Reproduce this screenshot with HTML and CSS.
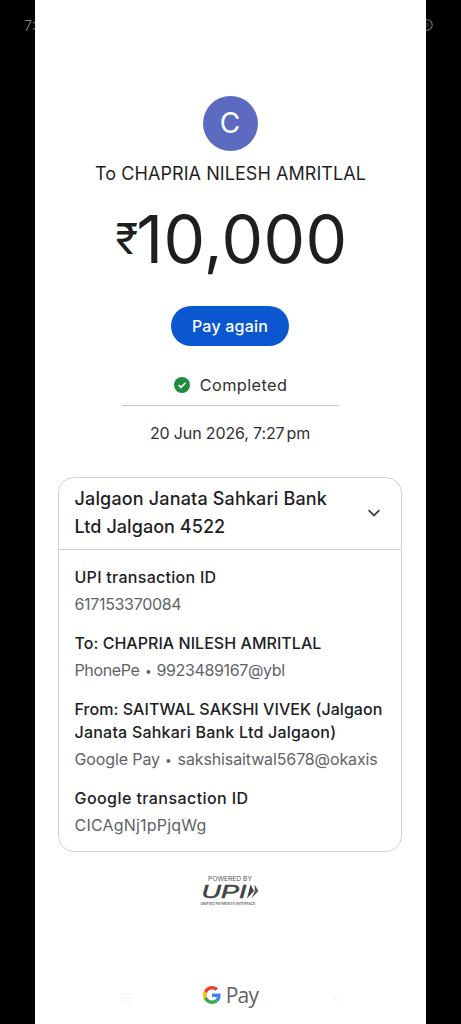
FILE: index.html
```
<!DOCTYPE html>
<html lang="en">
<head>
<meta charset="utf-8">
<meta name="viewport" content="width=device-width, initial-scale=1">
<title>Payment receipt</title>
<link rel="stylesheet" href="styles.css">
</head>
<body>
<div class="screen">
  <aside class="edge edge-left"><span class="clock">7:</span></aside>
  <main class="sheet">
    <div class="avatar">C</div>
    <h1 class="payee">To CHAPRIA NILESH AMRITLAL</h1>
    <div class="amount"><span class="currency">₹</span><span class="digits">10,000</span></div>
    <button class="pay-again" type="button">Pay again</button>
    <div class="status">
      <svg class="status-icon" viewBox="0 0 16 16"><circle cx="8" cy="8" r="8" fill="#1e8e3e"/><path d="M4.7 8.1l2.3 2.3 4.5-4.6" fill="none" stroke="#fff" stroke-width="1.6"/></svg>
      <span>Completed</span>
    </div>
    <hr class="rule">
    <time class="date">20 Jun 2026, 7:27<span class="meridiem">pm</span></time>

    <section class="card">
      <header class="card-head">
        <h2 class="bank"><span class="bank-line">Jalgaon Janata Sahkari Bank</span><span class="bank-line second">Ltd Jalgaon 4522</span></h2>
        <svg class="chevron" viewBox="0 0 14 8"><path d="M1.6 1.2L7 6.4l5.4-5.2" fill="none" stroke="#3c4043" stroke-width="1.8"/></svg>
      </header>
      <dl class="details">
        <div class="item"><dt class="upi-label">UPI transaction ID</dt><dd class="upi-value">617153370084</dd></div>
        <div class="item"><dt class="to-label">To: CHAPRIA NILESH AMRITLAL</dt><dd class="to-value">PhonePe <span class="dot">•</span> 9923489167@ybl</dd></div>
        <div class="item"><dt class="from-label">From: SAITWAL SAKSHI VIVEK (Jalgaon</dt><dt class="from-bank">Janata Sahkari Bank Ltd Jalgaon)</dt><dd class="from-value">Google Pay <span class="dot">•</span> sakshisaitwal5678@okaxis</dd></div>
        <div class="item"><dt class="google-label">Google transaction ID</dt><dd class="google-value">CICAgNj1pPjqWg</dd></div>
      </dl>
    </section>

    <svg class="upi-logo" viewBox="0 0 62 32">
      <text x="8" y="5.8" class="powered" textLength="44" lengthAdjust="spacingAndGlyphs">POWERED BY</text>
      <text x="1.5" y="23.3" class="upi-word" textLength="45" lengthAdjust="spacingAndGlyphs">UPI</text>
      <path d="M50.5 9.5l3.5 6.5-7 7.5z" fill="#444"/>
      <path d="M54.6 9.5l3.8 6.5-7 7.5 3.4-7.5z" fill="#555"/>
      <text x="0.5" y="30" class="upi-sub" textLength="55" lengthAdjust="spacingAndGlyphs">UNIFIED PAYMENTS INTERFACE</text>
    </svg>

    <footer class="brand-bar">
      <svg class="nav-mark" viewBox="0 0 12 10"><path d="M0 1h12M0 5h12M0 9h12" stroke="#f8f8f8" stroke-width="1.3"/></svg>
      <div class="brand">
        <svg class="g-mark" viewBox="0 0 48 48">
          <path fill="#EA4335" d="M24 9.5c3.54 0 6.71 1.22 9.21 3.6l6.85-6.85C35.9 2.38 30.47 0 24 0 14.62 0 6.51 5.38 2.56 13.22l7.98 6.19C12.43 13.72 17.74 9.5 24 9.5z"/>
          <path fill="#4285F4" d="M46.98 24.55c0-1.57-.15-3.09-.38-4.55H24v9.02h12.94c-.58 2.96-2.26 5.48-4.78 7.18l7.73 6c4.51-4.18 7.09-10.36 7.09-17.65z"/>
          <path fill="#FBBC05" d="M10.53 28.59c-.48-1.45-.76-2.99-.76-4.59s.27-3.14.76-4.59l-7.98-6.19C.92 16.46 0 20.12 0 24c0 3.88.92 7.54 2.56 10.78l7.97-6.19z"/>
          <path fill="#34A853" d="M24 48c6.48 0 11.93-2.13 15.89-5.81l-7.73-6c-2.15 1.45-4.92 2.3-8.16 2.3-6.26 0-11.57-4.22-13.47-9.91l-7.98 6.19C6.51 42.62 14.62 48 24 48z"/>
        </svg>
        <span class="pay">Pay</span>
      </div>
      <svg class="nav-mark back" viewBox="0 0 12 10"><path d="M9 1L5 5l4 4" fill="none" stroke="#f8f8f8" stroke-width="1.3"/></svg>
    </footer>
  </main>
  <aside class="edge edge-right"><svg class="ring" viewBox="0 0 12 12"><circle cx="6" cy="6" r="5.2" fill="none" stroke="#777" stroke-width="1.1"/><circle cx="6" cy="6" r="1.4" fill="none" stroke="#444"/></svg></aside>
</div>
</body>
</html>
```
FILE: styles.css
```
* { box-sizing: border-box; margin: 0; padding: 0; }
body { background: #000; font-family: Inter, "Noto Sans", sans-serif; color: #1f1f1f; }
.screen { display: grid; grid-template-columns: 35px 391px 35px; height: 1024px; overflow: hidden; }

.edge { background: #000; overflow: hidden; padding-top: 19px; }
.edge-left { padding-left: 24px; }
.clock { display: block; font-size: 14.5px; line-height: 14px; color: #8a8a8a; font-weight: 300; }
.ring { display: block; width: 12px; height: 12px; margin-left: -5px; }

.sheet { background: #fff; display: flex; flex-direction: column; align-items: center; padding-top: 96px; white-space: nowrap; }
.avatar { width: 55px; height: 55px; border-radius: 50%; background: #5c6bc0; color: #fff; font-size: 28px; font-weight: 400; line-height: 54px; text-align: center; margin-right: 1px; }
.payee { margin-top: 10px; font-size: 18px; font-weight: 400; line-height: 25px; letter-spacing: .06px; }
.amount { display: flex; align-items: center; height: 72px; margin-top: 17px; }
.currency { font-size: 42px; line-height: 72px; font-weight: 400; margin: 0 -2px 0 2px; }
.digits { font-size: 66px; line-height: 74px; font-weight: 400; letter-spacing: .4px; }
.pay-again { margin-top: 31px; width: 118px; height: 40px; border: 0; border-radius: 20px; background: #0b57d0; color: #fff; font: 500 16px/40px Inter, sans-serif; letter-spacing: .2px; margin-right: 1px; }
.status { display: flex; align-items: center; gap: 10px; height: 24px; margin-top: 27px; font-size: 16.3px; letter-spacing: .4px; color: #303030; }
.status-icon { width: 16px; height: 16px; }
.rule { width: 217px; height: 1px; margin-top: 8px; border: 0; background: #c4c7c5; }
.date { height: 24px; margin-top: 15px; font-size: 16px; line-height: 24px; letter-spacing: -.14px; color: #303030; margin-right: 1px; }
.meridiem { margin-left: 2px; }

.card { width: 344px; height: 375px; margin-top: 32px; border: 1px solid #d2d2d2; border-radius: 16px; margin-right: 1px; }
.card-head { display: flex; align-items: center; justify-content: space-between; height: 72px; padding: 0 20px 2px 15.5px; border-bottom: 1px solid #d2d2d2; }
.bank { font-size: 18px; font-weight: 450; line-height: 28px; }
.bank-line { display: block; letter-spacing: .16px; }
.second { letter-spacing: .06px; }
.chevron { width: 14px; height: 8px; }
.details { display: flex; flex-direction: column; gap: 16px; padding: 15.5px 0 0 15.5px; font-size: 16px; line-height: 23px; }
dt { font-weight: 500; color: #202124; }
dd { margin-top: 4px; color: #5f6368; }
.dot { display: inline-block; transform: scale(.75); }
.upi-label { letter-spacing: .28px; }
.upi-value { letter-spacing: -.33px; }
.to-label { letter-spacing: .04px; }
.to-value { letter-spacing: -.36px; }
.from-label { letter-spacing: .06px; }
.from-bank { letter-spacing: .22px; }
.from-value { letter-spacing: -.12px; }
.google-label { letter-spacing: .43px; }
.google-value { letter-spacing: .2px; }

.upi-logo { width: 62px; height: 32px; margin-top: 23px; overflow: visible; }
.powered { font: 400 5.8px Inter, sans-serif; fill: #555; }
.upi-word { font: italic 400 18.5px "Liberation Sans", sans-serif; fill: #444; stroke: #444; stroke-width: .5px; }
.upi-sub { font: 600 3.3px Inter, sans-serif; fill: #666; }

.brand-bar { display: flex; align-items: center; justify-content: space-between; width: 220px; height: 28px; margin-top: 73.5px; }
.nav-mark { width: 12px; height: 10px; margin-top: 6px; }
.brand { display: flex; align-items: center; gap: 5px; }
.g-mark { width: 18px; height: 18px; }
.pay { font: 400 21px/28px "Open Sans", sans-serif; letter-spacing: -.8px; color: #5f6368; }
```
